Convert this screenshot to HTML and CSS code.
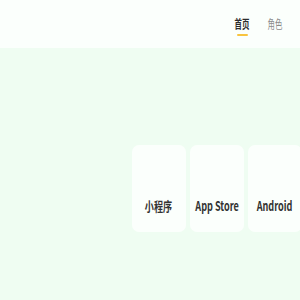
FILE: index.html
```
<!DOCTYPE html>
<html lang="zh">
  <head>
    <meta charset="UTF-8" />
    <meta name="viewport" content="width=device-width, initial-scale=1.0" />
    <title>首页</title>
    <link rel="stylesheet" href="styles.css">
  </head>
  <body>
    <!-- Top bar -->
    <header class="top-bar">
      <nav class="nav">
        <a class="nav-item active" href="#"><span class="nav-text">首页</span></a>
        <a class="nav-item" href="#"><span class="nav-text">角色</span></a>
      </nav>
    </header>

    <!-- Download cards -->
    <main class="main">
      <div class="card-row">
        <div class="card"><span class="card-label">小程序</span></div>
        <div class="card"><span class="card-label">App Store</span></div>
        <div class="card"><span class="card-label">Android</span></div>
      </div>
    </main>
  </body>
</html>
```

FILE: styles.css
```
body {
  margin: 0;
  height: 300px;
  overflow: hidden;
  background-color: #effdf2;
  font-family: "Noto Sans CJK SC", "Noto Sans", sans-serif;
}

/* Header */
.top-bar {
  height: 48px;
  background-color: #fbfffc;
  display: flex;
  justify-content: flex-end;
}

.nav {
  display: flex;
  gap: 13px;
  padding-right: 15px;
  padding-top: 16px;
}

.nav-item {
  position: relative;
  width: 20px;
  height: 20px;
  display: flex;
  justify-content: center;
  font-size: 12px;
  line-height: 16px;
  color: #8a8a8a;
  text-decoration: none;
}

.nav-text {
  display: inline-block;
  white-space: nowrap;
  transform: scaleX(0.62);
}

.nav-item.active {
  color: #2b2b2b;
  font-weight: 700;
}

.nav-item.active::after {
  content: "";
  position: absolute;
  left: 5px;
  width: 11px;
  bottom: 0;
  height: 2px;
  border-radius: 1px;
  background-color: #f8c440;
}

/* Cards */
.main {
  padding-top: 97px;
  padding-left: 132px;
}

.card-row {
  display: flex;
  gap: 4px;
}

.card {
  flex: none;
  width: 54px;
  height: 87px;
  border-radius: 7px;
  background-color: #fbfffc;
  display: flex;
  justify-content: center;
  align-items: flex-end;
  padding-bottom: 18px;
  box-sizing: border-box;
}

.card-label {
  display: inline-block;
  font-size: 13px;
  line-height: 16px;
  font-weight: 700;
  color: #333;
  white-space: nowrap;
  transform: scaleX(0.7);
}
```
